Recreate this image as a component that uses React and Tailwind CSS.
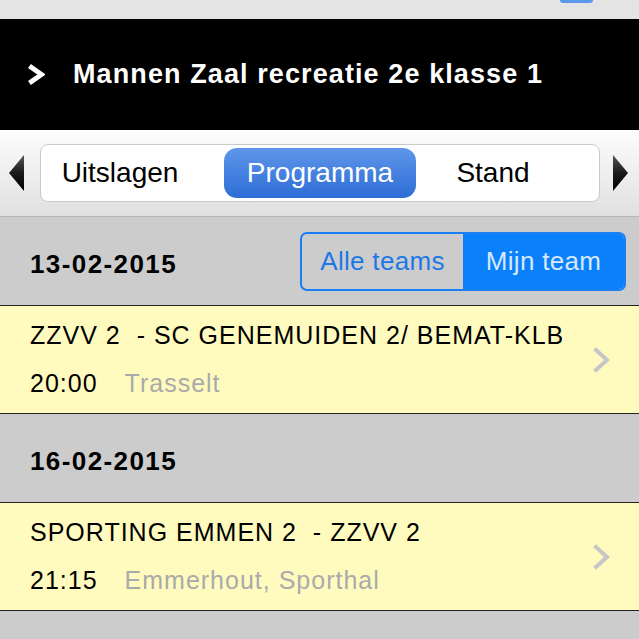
import React from 'react';

// Kleine pijlen voor de tabbalk en rijen
function TriangleLeft() {
    return (
        <svg width="16" height="36" viewBox="0 0 16 36">
            <defs>
                <linearGradient id="tl" x1="0" y1="0" x2="0" y2="1">
                    <stop offset="0" stopColor="#555" />
                    <stop offset="0.5" stopColor="#1a1a1a" />
                    <stop offset="1" stopColor="#000" />
                </linearGradient>
            </defs>
            <polygon points="15,0 15,36 0,18" fill="url(#tl)" />
        </svg>
    );
}

function TriangleRight() {
    return (
        <svg width="16" height="36" viewBox="0 0 16 36">
            <defs>
                <linearGradient id="tr" x1="0" y1="0" x2="0" y2="1">
                    <stop offset="0" stopColor="#555" />
                    <stop offset="0.5" stopColor="#1a1a1a" />
                    <stop offset="1" stopColor="#000" />
                </linearGradient>
            </defs>
            <polygon points="1,0 1,36 16,18" fill="url(#tr)" />
        </svg>
    );
}

function Chevron({ color, width, height, stroke }) {
    return (
        <svg width={width} height={height} viewBox={`0 0 ${width} ${height}`}>
            <polyline
                points={`${stroke / 2 + 1},${stroke / 2 + 1} ${width - stroke / 2 - 1},${height / 2} ${stroke / 2 + 1},${height - stroke / 2 - 1}`}
                fill="none"
                stroke={color}
                strokeWidth={stroke}
                strokeLinecap="square"
                strokeLinejoin="miter"
            />
        </svg>
    );
}

const matches = [
    {
        date: '13-02-2015',
        teams: 'ZZVV 2\u00a0 - SC GENEMUIDEN 2/ BEMAT-KLB',
        time: '20:00',
        place: 'Trasselt',
        filter: true,
    },
    {
        date: '16-02-2015',
        teams: 'SPORTING EMMEN 2\u00a0 - ZZVV 2',
        time: '21:15',
        place: 'Emmerhout, Sporthal',
        filter: false,
    },
];

export default function App() {
    return (
        <div className="w-[639px] h-[639px] overflow-hidden bg-[#cccccc] font-['Liberation_Sans',Arial,sans-serif]">
            {/* Bovenste strook */}
            <div className="h-[19px] bg-[#e4e4e4] flex justify-end pr-[46px]">
                <div className="w-[33px] h-[3px] rounded-b-[3px] bg-[#5a98ec]" />
            </div>

            {/* Titel */}
            <div className="h-[111px] bg-black flex items-center pl-[28px]">
                <Chevron color="#ffffff" width={17} height={21} stroke={5} />
                <span className="ml-[28px] text-white font-bold text-[27px] leading-none tracking-[1.1px]">
                    Mannen Zaal recreatie 2e klasse 1
                </span>
            </div>

            {/* Tabbalk */}
            <div className="h-[87px] bg-gradient-to-b from-[#fdfdfd] to-[#e0e0e0] border-b border-[#b5b5b5] flex items-center pl-[9px] pr-[10px]">
                <TriangleLeft />
                <div className="ml-[15px] w-[560px] h-[58px] bg-white rounded-[8px] border border-[#c9c9c9] flex items-center pl-[4px] text-[28px] leading-none">
                    <div className="w-[150px] flex justify-center text-black">Uitslagen</div>
                    <div className="ml-[29px] w-[192px] h-[50px] rounded-[13px] bg-gradient-to-b from-[#5e96e9] to-[#2d6dd6] text-white flex items-center justify-center">
                        Programma
                    </div>
                    <div className="w-[154px] flex justify-center text-black">Stand</div>
                </div>
                <div className="ml-[12px]">
                    <TriangleRight />
                </div>
            </div>

            {matches.map((m) => (
                <div key={m.date}>
                    <div className="h-[88px] flex items-center justify-between pl-[30px] pr-[13px]">
                        <span className="pt-[5px] font-bold text-[26px] leading-none tracking-[1.4px] text-black">{m.date}</span>
                        {m.filter && (
                            <div className="w-[326px] h-[59px] rounded-[7px] border-2 border-[#1a7ff2] flex overflow-hidden text-[26px] leading-none tracking-[0.3px]">
                                <div className="w-[161px] flex items-center justify-center text-[#1d78e6]">Alle teams</div>
                                <div className="flex-1 bg-[#0a80fb] flex items-center justify-center text-[#d6e8ff]">Mijn team</div>
                            </div>
                        )}
                    </div>
                    <div className="h-[109px] bg-[#fffbbf] border-y border-[#222222] flex items-center pl-[30px] pr-[29px]">
                        <div className="flex-1 flex flex-col gap-[23px] text-[25px] leading-none tracking-[1px]">
                            <div className="text-black">{m.teams}</div>
                            <div className="flex">
                                <span className="text-black">{m.time}</span>
                                <span className="ml-[27px] text-[#aaaaaa]">{m.place}</span>
                            </div>
                        </div>
                        <Chevron color="#c6c6c6" width={17} height={26} stroke={4} />
                    </div>
                </div>
            ))}
        </div>
    );
}
